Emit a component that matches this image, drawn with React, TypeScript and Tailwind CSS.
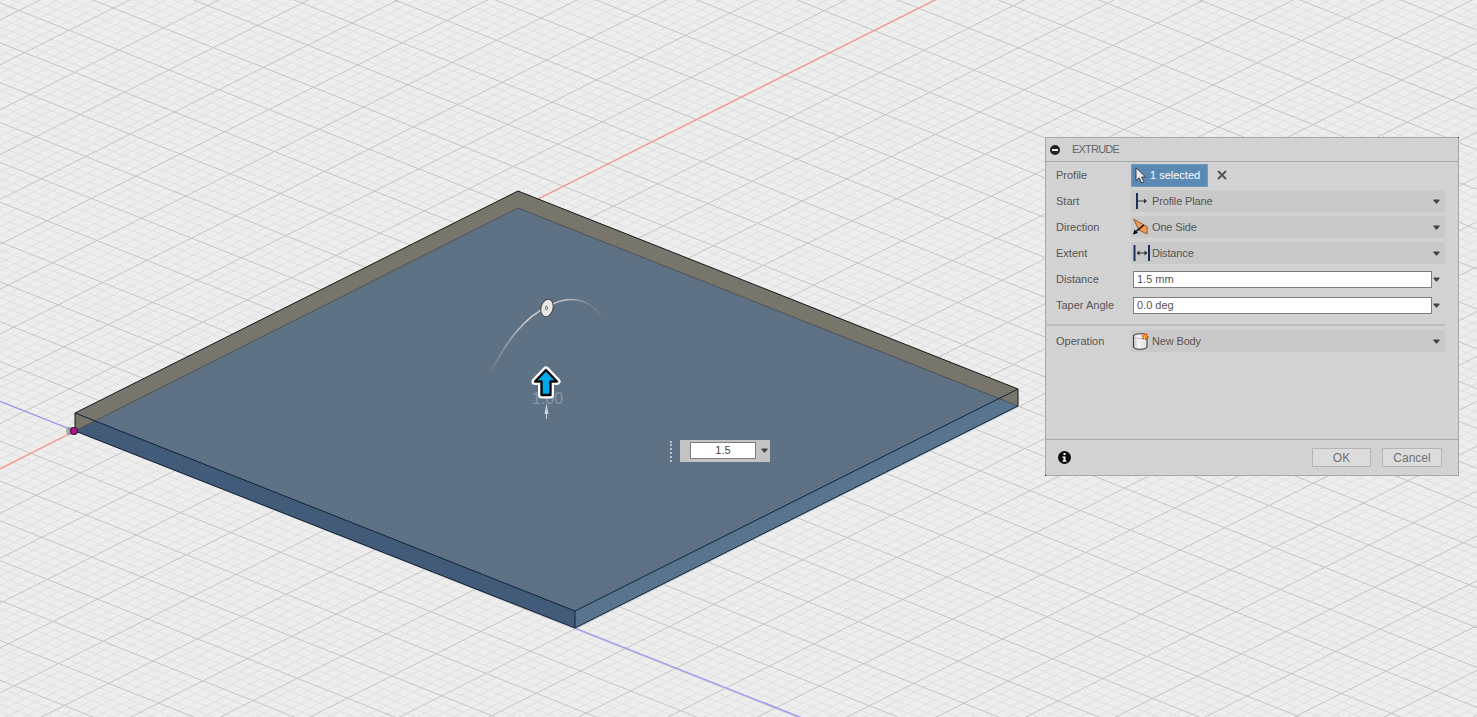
import type { ReactNode } from "react";

// Isometric grid: one major cell along each axis, measured from the origin point
const ORIGIN = { x: 75, y: 431 };
const AXIS_A = { x: 50, y: 19.8 };
const AXIS_B = { x: 44.4, y: -22.25 };

const gridLines = () => {
  const lines: { x1: number; y1: number; x2: number; y2: number; major: boolean }[] = [];
  for (let i = -200; i <= 200; i++) {
    const major = i % 5 === 0;
    const ax = ORIGIN.x + (AXIS_B.x * i) / 5;
    const ay = ORIGIN.y + (AXIS_B.y * i) / 5;
    lines.push({ x1: ax - AXIS_A.x * 40, y1: ay - AXIS_A.y * 40, x2: ax + AXIS_A.x * 40, y2: ay + AXIS_A.y * 40, major });
    const bx = ORIGIN.x + (AXIS_A.x * i) / 5;
    const by = ORIGIN.y + (AXIS_A.y * i) / 5;
    lines.push({ x1: bx - AXIS_B.x * 40, y1: by - AXIS_B.y * 40, x2: bx + AXIS_B.x * 40, y2: by + AXIS_B.y * 40, major });
  }
  return lines.sort((l, r) => Number(l.major) - Number(r.major));
};

const Viewport = () => (
  <svg className="block" width={1477} height={717} viewBox="0 0 1477 717">
    <defs>
      <linearGradient id="arcFade" gradientUnits="userSpaceOnUse" x1="491" y1="372" x2="601" y2="316">
        <stop offset="0" stopColor="#c8ccd0" stopOpacity="0.1" />
        <stop offset="0.45" stopColor="#d4d6d8" stopOpacity="0.9" />
        <stop offset="0.8" stopColor="#d4d6d8" stopOpacity="0.9" />
        <stop offset="1" stopColor="#c8ccd0" stopOpacity="0.1" />
      </linearGradient>
    </defs>
    <rect width={1477} height={717} fill="#ededed" />
    {gridLines().map((l, i) => (
      <line key={i} x1={l.x1} y1={l.y1} x2={l.x2} y2={l.y2} stroke={l.major ? "#c4c4c4" : "#e0e0e0"} strokeWidth={1} />
    ))}
    {/* axes */}
    <line x1={-4} y1={471} x2={75} y2={431} stroke="#f79292" strokeWidth={1.2} />
    <line x1={519} y1={208.5} x2={941} y2={-3} stroke="#f79292" strokeWidth={1.2} />
    <line x1={-2} y1={400.5} x2={75} y2={431} stroke="#9494f7" strokeWidth={1.2} />
    <line x1={575} y1={628} x2={805} y2={719} stroke="#9494f7" strokeWidth={1.2} />
    {/* plate */}
    <polygon points="75,431 518,208 1018,406 575,628" fill="#5f7285" />
    <polygon points="75,413 575,611 575,628 75,431" fill="#415b78" />
    <polygon points="575,611 1018,389 1018,406 575,628" fill="#587590" />
    <polygon points="75,413 518,191 1018,389 1018,406 518,208 75,431" fill="#78756a" />
    <line x1={518} y1={208} x2={1018} y2={406} stroke="#4a4f55" strokeWidth={1} />
    <line x1={518} y1={208} x2={75} y2={431} stroke="#4a4f55" strokeWidth={1} />
    <polyline points="75,431 75,413 518,191 1018,389 1018,406" fill="none" stroke="#15181c" strokeWidth={1} />
    <polyline points="75,413 575,611 1018,389" fill="none" stroke="#12233a" strokeWidth={1} />
    <polyline points="75,431 575,628 1018,406" fill="none" stroke="#12233a" strokeWidth={1} />
    <line x1={575} y1={611} x2={575} y2={628} stroke="#12233a" strokeWidth={1} />
    {/* origin point */}
    <circle cx={70} cy={431} r={4} fill="#8b8b8b" opacity={0.7} />
    <circle cx={74} cy={431} r={3.5} fill="#b5128c" stroke="#3c1b3c" strokeWidth={1.2} />
    {/* angle manipulator */}
    <path d="M491 372 C507 339 527 316 547 307 C567 295 588 297 601 316" fill="none" stroke="url(#arcFade)" strokeWidth={1.5} />
    <ellipse cx={547} cy={308} rx={6} ry={9} transform="rotate(14 547 308)" fill="#e6e6e6" stroke="#444" strokeWidth={1} />
    <ellipse cx={546.5} cy={308} rx={1} ry={2} fill="none" stroke="#555" strokeWidth={0.8} />
    <text x={532} y={404} fill="#9db0c2" fontSize={16} opacity={0.6} fontFamily="'Liberation Sans', sans-serif">
      1.00
    </text>
    <path d="M546.5 403 L548.5 414 L547 414 L547 419 L546 419 L546 414 L544.5 414 Z" fill="#c5d4e2" />
    {/* distance arrow */}
    <path
      d="M546 370 L557 381.5 L550.5 381.5 L550.5 395 L541.5 395 L541.5 381.5 L535 381.5 Z"
      fill="#00a4e4"
      stroke="#ffffff"
      strokeWidth={7}
      strokeLinejoin="round"
    />
    <path
      d="M546 370 L557 381.5 L550.5 381.5 L550.5 395 L541.5 395 L541.5 381.5 L535 381.5 Z"
      fill="#00a8ea"
      stroke="#0a0a0a"
      strokeWidth={2.4}
      strokeLinejoin="round"
    />
  </svg>
);

const Caret = () => (
  <svg width={7} height={5} viewBox="0 0 7 5" className="shrink-0">
    <path d="M0.5 0.5H6.5V1.5L4 4.5H3L0.5 1.5Z" fill="#444" />
  </svg>
);

const StartIcon = () => (
  <svg width={18} height={20} viewBox="0 0 18 20">
    <rect x={3} y={2} width={2} height={16} fill="#17305c" />
    <path d="M5 10H12" stroke="#333" strokeWidth={1} />
    <path d="M11 7.5L14 10L11 12.5Z" fill="#333" />
  </svg>
);

const DirectionIcon = () => (
  <svg width={18} height={20} viewBox="0 0 18 20">
    <path d="M0.8 2.3L14.2 9.7V17L5.8 13Z" fill="#f79a4f" stroke="#7a4a26" strokeWidth={0.8} strokeLinejoin="round" />
    <path d="M10.8 8L3 14.5" stroke="#0a0a0a" strokeWidth={1.6} />
    <path d="M0 17.5L1.5 12.5L5 16Z" fill="#0a0a0a" />
  </svg>
);

const ExtentIcon = () => (
  <svg width={18} height={20} viewBox="0 0 18 20">
    <rect x={0.5} y={2} width={2} height={16} fill="#17305c" />
    <rect x={15} y={2} width={2} height={16} fill="#17305c" />
    <path d="M4 10H14" stroke="#333" strokeWidth={1} />
    <path d="M6.5 7.5L3.5 10L6.5 12.5Z M11.5 7.5L14.5 10L11.5 12.5Z" fill="#333" />
  </svg>
);

const NewBodyIcon = () => (
  <svg width={18} height={20} viewBox="0 0 18 20">
    <defs>
      <linearGradient id="bodyShade" x1="0" y1="0" x2="1" y2="0">
        <stop offset="0" stopColor="#c4c4c4" />
        <stop offset="0.35" stopColor="#f5f5f5" />
        <stop offset="1" stopColor="#dedede" />
      </linearGradient>
    </defs>
    <path d="M0.5 5C0.5 2 14 2 14 5V16C14 19 0.5 19 0.5 16Z" fill="url(#bodyShade)" stroke="#333" strokeWidth={1} />
    <path d="M1 5.5C1 8 13.5 8 13.5 5.5" fill="#f7f7f7" stroke="#aaa" strokeWidth={0.8} />
    <circle cx={12} cy={5.5} r={2.4} fill="#f5c21e" stroke="#d8331c" strokeWidth={2} strokeDasharray="1.2 1" />
  </svg>
);

const CursorIcon = () => (
  <svg width={14} height={17} viewBox="0 0 14 17">
    <path d="M1 0.8V13.5L4.2 10.8L6.6 16L9 15L6.6 10H10.6Z" fill="#e8e8ee" stroke="#333" strokeWidth={0.9} strokeLinejoin="round" />
  </svg>
);

const Row = ({ label, children }: { label: string; children: ReactNode }) => (
  <div className="flex h-[22px] items-center">
    <span className="w-[85px] shrink-0 pl-[10px]">{label}</span>
    {children}
  </div>
);

const SelectBox = ({ icon, value }: { icon: ReactNode; value: string }) => (
  <div className="flex h-[22px] w-[314px] items-center bg-[#c9c9c9] pr-[5px]">
    <span className="flex w-[21px] shrink-0 justify-center">{icon}</span>
    <span className="flex-1 tracking-[-0.15px]">{value}</span>
    <Caret />
  </div>
);

const ValueInput = ({ value }: { value: string }) => (
  <div className="flex items-center pl-[2px]">
    <div className="flex h-[17px] w-[299px] items-center border border-[#7e7e7e] bg-white pl-[3px]">{value}</div>
    <span className="ml-[1px] flex">
      <Caret />
    </span>
  </div>
);

const ExtrudePanel = () => (
  <div
    className="absolute left-[1045px] top-[137px] flex h-[339px] w-[414px] flex-col border border-[#a8a8a8] bg-[#d2d2d2] text-[11px] leading-none text-[#555555]"
    style={{ fontFamily: "'Liberation Sans', Arial, sans-serif" }}
  >
    <span className="absolute -right-px -top-px h-px w-px bg-black" />
    <span className="absolute -bottom-px -left-px h-px w-px bg-black" />
    <div className="flex h-[24px] shrink-0 items-center gap-[12px] border-b border-[#a8a8a8] pl-[4px]">
      <svg width={10} height={10} viewBox="0 0 10 10">
        <circle cx={5} cy={5} r={5} fill="#222" />
        <rect x={2} y={4} width={6} height={2} fill="#eee" />
      </svg>
      <span className="tracking-[-0.8px] text-[#666666]">EXTRUDE</span>
    </div>
    <div className="flex flex-1 flex-col gap-[4px] pt-[2px]">
      <Row label="Profile">
        <div className="flex h-[23px] w-[77px] items-center gap-[1px] border border-[#6f9cc4] bg-[#5a89b4] pl-[3px] text-white">
          <CursorIcon />
          <span>1 selected</span>
        </div>
        <svg className="ml-[9px]" width={10} height={10} viewBox="0 0 10 10">
          <path d="M1 1L9 9M9 1L1 9" stroke="#555" strokeWidth={2} />
        </svg>
      </Row>
      <Row label="Start">
        <SelectBox icon={<StartIcon />} value="Profile Plane" />
      </Row>
      <Row label="Direction">
        <SelectBox icon={<DirectionIcon />} value="One Side" />
      </Row>
      <Row label="Extent">
        <SelectBox icon={<ExtentIcon />} value="Distance" />
      </Row>
      <Row label="Distance">
        <ValueInput value="1.5 mm" />
      </Row>
      <Row label="Taper Angle">
        <ValueInput value="0.0 deg" />
      </Row>
      <div className="mt-[4px] h-[2px] w-[399px] bg-[#bdbdbd]" />
      <Row label="Operation">
        <SelectBox icon={<NewBodyIcon />} value="New Body" />
      </Row>
    </div>
    <div className="flex h-[36px] shrink-0 items-center justify-between border-t border-[#a8a8a8] pl-[12px] pr-[16px]">
      <svg width={13} height={13} viewBox="0 0 13 13">
        <circle cx={6.5} cy={6.5} r={6.5} fill="#0c0c0c" />
        <rect x={5.5} y={2} width={2} height={2} fill="#fff" />
        <path d="M4.5 5.5H7.5V9.5H8.5V10.8H4.5V9.5H5.5V6.8H4.5Z" fill="#fff" />
      </svg>
      <div className="flex gap-[11px] text-[12px] text-[#707070]">
        <button className="h-[19px] w-[59px] border border-[#b5b5b5] bg-[#dcdcdc]">OK</button>
        <button className="h-[19px] w-[60px] border border-[#b5b5b5] bg-[#dcdcdc]">Cancel</button>
      </div>
    </div>
  </div>
);

const FloatingInput = () => (
  <div
    className="absolute left-[670px] top-[440px] flex items-center text-[11px] leading-none text-[#444444]"
    style={{ fontFamily: "'Liberation Sans', Arial, sans-serif" }}
  >
    <div className="mr-[8px] h-[21px] w-[2px] border-l-2 border-dotted border-[#b8c2cb]" />
    <div className="flex h-[22px] w-[90px] items-start bg-[#c3c3c3] pl-[10px] pt-[2px]">
      <div className="flex h-[17px] w-[66px] items-center justify-center border border-[#7e7e7e] bg-white">1.5</div>
      <span className="ml-[5px] mt-[6px] flex">
        <Caret />
      </span>
    </div>
  </div>
);

export default function App() {
  return (
    <div className="relative h-[717px] w-[1477px] overflow-hidden">
      <Viewport />
      <FloatingInput />
      <ExtrudePanel />
    </div>
  );
}
